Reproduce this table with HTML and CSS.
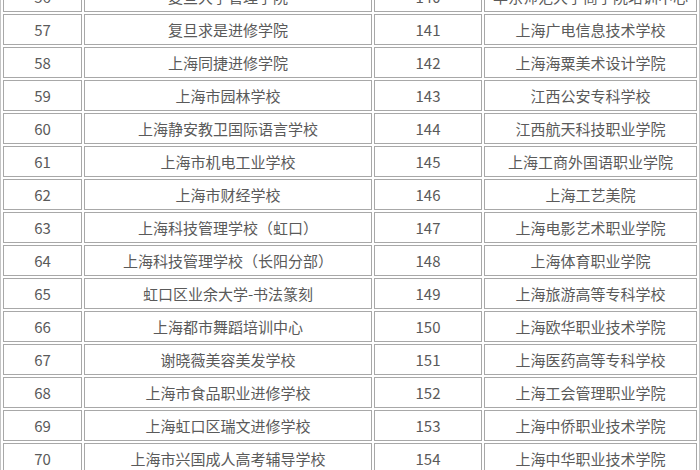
FILE: index.html
```html
<!DOCTYPE html>
<html lang="zh">
<head>
<meta charset="utf-8">
<title>学校列表</title>
<link rel="stylesheet" href="styles.css">
</head>
<body>
<table class="list">
<tr><td class="c1">56</td><td class="c2">复旦大学管理学院</td><td class="c3">140</td><td class="c4">华东师范大学商学院培训中心</td></tr>
<tr><td class="c1">57</td><td class="c2">复旦求是进修学院</td><td class="c3">141</td><td class="c4">上海广电信息技术学校</td></tr>
<tr><td class="c1">58</td><td class="c2">上海同捷进修学院</td><td class="c3">142</td><td class="c4">上海海粟美术设计学院</td></tr>
<tr><td class="c1">59</td><td class="c2">上海市园林学校</td><td class="c3">143</td><td class="c4">江西公安专科学校</td></tr>
<tr><td class="c1">60</td><td class="c2">上海静安教卫国际语言学校</td><td class="c3">144</td><td class="c4">江西航天科技职业学院</td></tr>
<tr><td class="c1">61</td><td class="c2">上海市机电工业学校</td><td class="c3">145</td><td class="c4">上海工商外国语职业学院</td></tr>
<tr><td class="c1">62</td><td class="c2">上海市财经学校</td><td class="c3">146</td><td class="c4">上海工艺美院</td></tr>
<tr><td class="c1">63</td><td class="c2">上海科技管理学校（虹口）</td><td class="c3">147</td><td class="c4">上海电影艺术职业学院</td></tr>
<tr><td class="c1">64</td><td class="c2">上海科技管理学校（长阳分部）</td><td class="c3">148</td><td class="c4">上海体育职业学院</td></tr>
<tr><td class="c1">65</td><td class="c2">虹口区业余大学-书法篆刻</td><td class="c3">149</td><td class="c4">上海旅游高等专科学校</td></tr>
<tr><td class="c1">66</td><td class="c2">上海都市舞蹈培训中心</td><td class="c3">150</td><td class="c4">上海欧华职业技术学院</td></tr>
<tr><td class="c1">67</td><td class="c2">谢晓薇美容美发学校</td><td class="c3">151</td><td class="c4">上海医药高等专科学校</td></tr>
<tr><td class="c1">68</td><td class="c2">上海市食品职业进修学校</td><td class="c3">152</td><td class="c4">上海工会管理职业学院</td></tr>
<tr><td class="c1">69</td><td class="c2">上海虹口区瑞文进修学校</td><td class="c3">153</td><td class="c4">上海中侨职业技术学院</td></tr>
<tr><td class="c1">70</td><td class="c2">上海市兴国成人高考辅导学校</td><td class="c3">154</td><td class="c4">上海中华职业技术学院</td></tr>
</table>
</body>
</html>
```
FILE: styles.css
```css
html, body {
  margin: 0;
  padding: 0;
  background: #ffffff;
  overflow: hidden;
}
.list {
  margin-top: -22px;
  width: 700px;
  table-layout: fixed;
  border-collapse: separate;
  border-spacing: 2px;
  border: 1px solid #c4c4c4;
  font-family: "Noto Sans CJK SC", "Noto Sans", sans-serif;
  font-size: 15px;
  color: #5a5a5a;
}
.list td {
  box-sizing: border-box;
  height: 31px;
  padding: 0;
  border: 1px solid #a8a8a8;
  text-align: center;
  vertical-align: middle;
  line-height: 29px;
  white-space: nowrap;
  overflow: hidden;
}
.c1 { width: 79px; }
.c2 { width: 288px; }
.c3 { width: 108px; }
.c4 { width: 213px; }
```
